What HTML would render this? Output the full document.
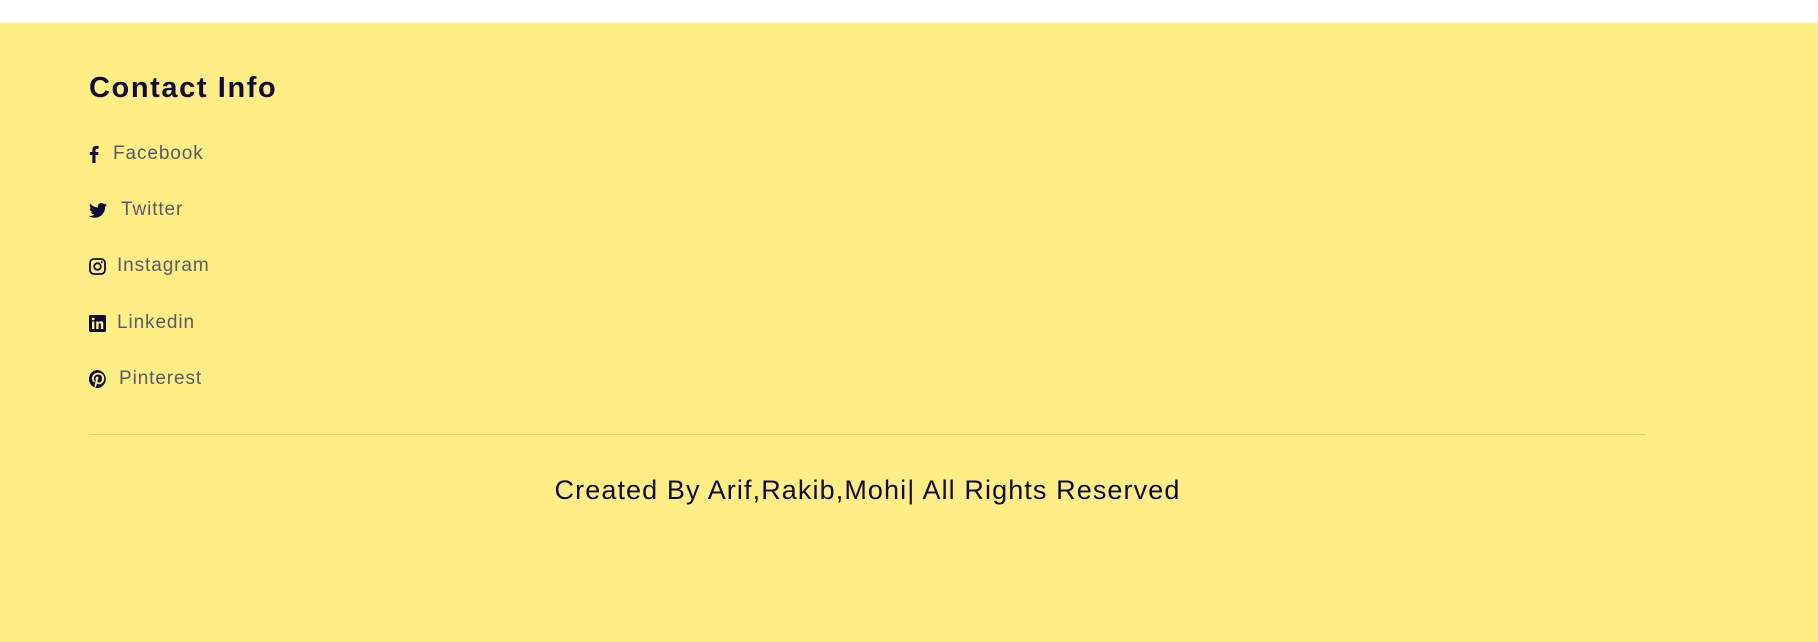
<!DOCTYPE html>
<html><head><meta charset="utf-8"><style>
html,body{margin:0;padding:0;width:1818px;height:642px;overflow:hidden;background:#fff;font-family:"Liberation Sans",sans-serif}
.foot{position:absolute;left:0;top:23px;width:1818px;height:619px;background:#ffed85}
h2{position:absolute;left:89px;top:72px;margin:0;font-size:29px;font-weight:bold;color:#100c3a;letter-spacing:1.6px}
.it{position:absolute;left:89px;height:24px;font-size:19px;color:#5a5a6a;display:flex;align-items:center;letter-spacing:0.9px}
.it svg{fill:#100c3a;flex:none}
.line{position:absolute;left:89px;top:434px;width:1557px;height:1px;background:#e0d27a}
.copy{position:absolute;left:89px;width:1557px;top:475px;text-align:center;font-size:27px;color:#100c3a;letter-spacing:1.1px}
</style></head><body>
<div class="foot"></div>
<h2>Contact Info</h2>
<div class="it" style="top:142px"><svg width="10" height="18" viewBox="0 0 10 18"><path d="M6.5 18V10h2.6l.4-3H6.5V5.2c0-.9.3-1.5 1.5-1.5h1.6V1C9.3 1 8.4.9 7.3.9 5 .9 3.4 2.3 3.4 4.9V7H.8v3h2.6v8z"/></svg><span style="margin-left:14px">Facebook</span></div>
<div class="it" style="top:198px"><svg width="18" height="15" viewBox="0 0 24 20"><path d="M24 2.4c-.9.4-1.8.7-2.8.8 1-.6 1.8-1.6 2.2-2.7-1 .6-2 1-3.100 1.200C19.4.7 18.1 0 16.6 0c-2.7 0-4.9 2.2-4.9 4.9 0 .4 0 .8.1 1.1C7.7 5.8 4.1 3.9 1.7.9c-.4.7-.7 1.6-.7 2.5 0 1.7.9 3.2 2.2 4.1-.8 0-1.600-.2-2.200-.6v.1c0 2.4 1.7 4.4 3.9 4.8-.4.1-.8.2-1.3.2-.3 0-.6 0-.9-.1.6 2 2.4 3.4 4.6 3.4-1.7 1.3-3.8 2.1-6.1 2.1-.4 0-.8 0-1.2-.1C2.2 18.8 4.8 19.600 7.5 19.600c9.1 0 14-7.5 14-14v-.6c1-.7 1.8-1.6 2.5-2.6z"/></svg><span style="margin-left:14px">Twitter</span></div>
<div class="it" style="top:254px"><svg width="17" height="17" viewBox="0 0 17 17"><rect x="1" y="1" width="15" height="15" rx="4" fill="none" stroke="#100c3a" stroke-width="1.8"/><circle cx="8.5" cy="8.5" r="3.3" fill="none" stroke="#100c3a" stroke-width="1.8"/><circle cx="12.8" cy="4.2" r="1"/></svg><span style="margin-left:11px">Instagram</span></div>
<div class="it" style="top:311px"><svg width="17" height="17" viewBox="0 0 17 17"><rect width="17" height="17" rx="1.5"/><rect x="3" y="6.5" width="2.4" height="7.5" fill="#ffed85"/><circle cx="4.2" cy="4" r="1.4" fill="#ffed85"/><path d="M7.2 6.5h2.3v1.1c.4-.8 1.3-1.3 2.4-1.3 2 0 2.4 1.3 2.4 3V14h-2.4v-4.1c0-.9-.1-1.7-1.1-1.7s-1.2.8-1.2 1.7V14H7.2z" fill="#ffed85"/></svg><span style="margin-left:11px">Linkedin</span></div>
<div class="it" style="top:367px"><svg width="18" height="18" viewBox="0 0 18 18"><path d="M9 0a9 9 0 0 0-3.3 17.4c-.1-.7-.1-1.8 0-2.6l1.1-4.6s-.3-.6-.3-1.4c0-1.3.8-2.3 1.7-2.3.8 0 1.2.6 1.2 1.3 0 .8-.5 2-.8 3.1-.2.9.5 1.7 1.4 1.7 1.7 0 3-1.8 3-4.3 0-2.3-1.6-3.8-3.9-3.8-2.7 0-4.2 2-4.2 4.1 0 .8.3 1.7.7 2.2.1.1.1.2.1.3l-.3 1.1c0 .2-.2.2-.4.1-1.2-.6-2-2.3-2-3.7 0-3 2.2-5.8 6.3-5.8 3.3 0 5.9 2.4 5.9 5.5 0 3.3-2.1 6-5 6-1 0-1.9-.5-2.2-1.1l-.6 2.3c-.2.8-.8 1.9-1.2 2.6A9 9 0 1 0 9 0z"/></svg><span style="margin-left:12px">Pinterest</span></div>
<div class="line"></div>
<div class="copy">Created By Arif,Rakib,Mohi| All Rights Reserved</div>
</body></html>
